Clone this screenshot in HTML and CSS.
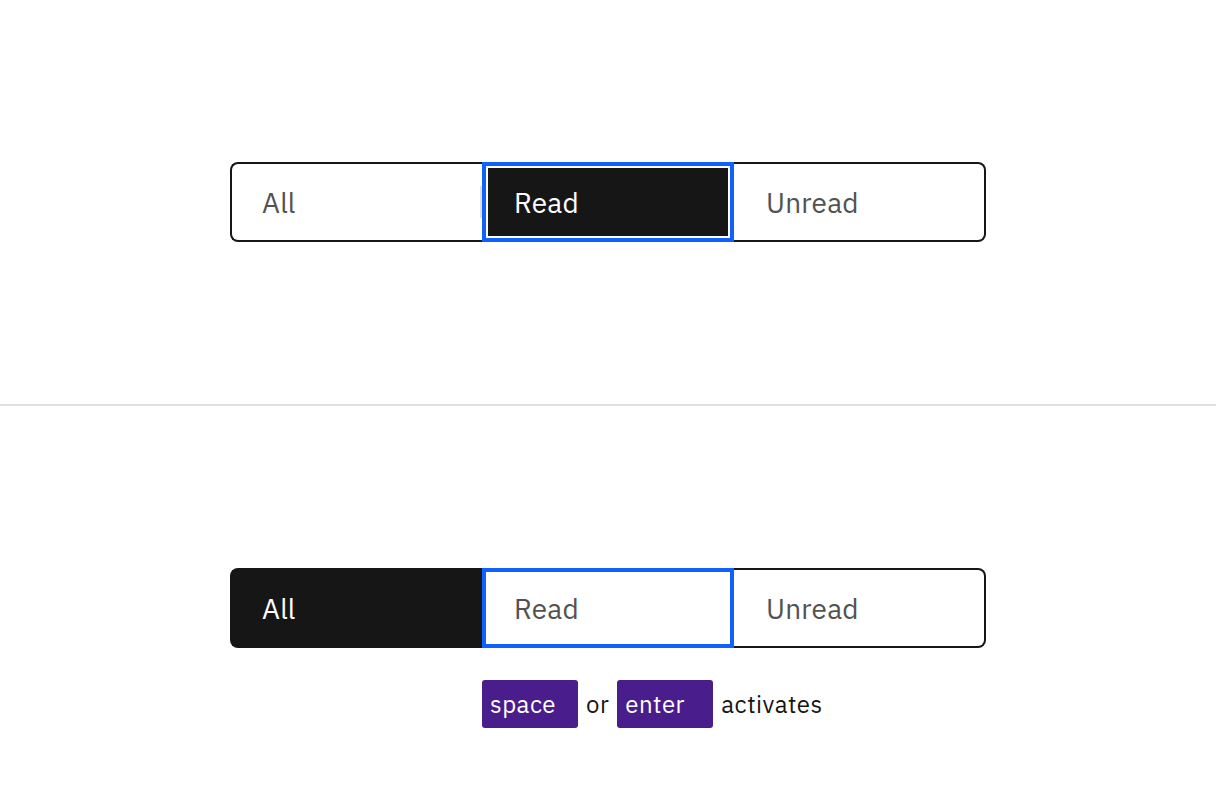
FILE: index.html
```html
<!DOCTYPE html>
<html lang="en">
<head>
<meta charset="utf-8">
<title>Content switcher</title>
<link rel="stylesheet" href="styles.css">
</head>
<body>
<main class="page">
  <section class="panel">
    <div class="switcher" role="tablist">
      <button class="seg seg-first seg-divider">All</button>
      <button class="seg seg-selected seg-focus">Read</button>
      <button class="seg seg-last">Unread</button>
    </div>
  </section>
  <hr class="rule">
  <section class="panel">
    <div class="group">
      <div class="switcher" role="tablist">
        <button class="seg seg-first seg-selected">All</button>
        <button class="seg seg-focus">Read</button>
        <button class="seg seg-last">Unread</button>
      </div>
      <div class="hint">
        <span class="key">space</span>
        <span class="word">or</span>
        <span class="key">enter</span>
        <span class="word">activates</span>
      </div>
    </div>
  </section>
</main>
</body>
</html>
```

FILE: styles.css
```css
* { box-sizing: border-box; }

html, body {
  margin: 0;
  padding: 0;
  background: #ffffff;
}

body {
  font-family: "IBM Plex Sans", "Noto Sans", "Open Sans", sans-serif;
  color: #161616;
}

.page {
  display: flex;
  flex-direction: column;
  width: 1216px;
  height: 810px;
}

.panel {
  height: 404px;
  display: flex;
  flex-direction: column;
  align-items: center;
  padding-top: 162px;
}

.rule {
  margin: 0;
  border: none;
  height: 2px;
  background: #e0e0e0;
}

.group {
  display: flex;
  flex-direction: column;
  gap: 32px;
}

.switcher {
  display: flex;
  width: 756px;
  height: 80px;
}

.seg {
  position: relative;
  width: 252px;
  height: 80px;
  display: flex;
  align-items: center;
  padding: 0 0 0 32px;
  margin: 0;
  background: #ffffff;
  border: 2px solid #161616;
  border-left: none;
  border-right: none;
  font-family: inherit;
  font-size: 28px;
  font-weight: 400;
  letter-spacing: 0.2px;
  color: #525252;
  text-align: left;
  cursor: pointer;
}

.seg-first {
  border-left: 2px solid #161616;
  border-radius: 8px 0 0 8px;
  padding-left: 30px;
}

.seg-last {
  border-right: 2px solid #161616;
  border-radius: 0 8px 8px 0;
}

.seg-divider::after {
  content: "";
  position: absolute;
  right: 0;
  top: 22px;
  width: 2px;
  height: 32px;
  background: #e0e0e0;
}

.seg-selected {
  background: #161616;
  color: #ffffff;
}

.seg-focus {
  border: 2px solid #0f62fe;
  box-shadow: inset 0 0 0 2px #0f62fe, inset 0 0 0 4px #ffffff;
  padding-left: 30px;
}

.hint {
  display: flex;
  align-items: center;
  gap: 8px;
  padding-left: 252px;
  font-size: 24px;
  line-height: 1;
  letter-spacing: 0.5px;
}

.key {
  width: 96px;
  height: 48px;
  display: flex;
  align-items: center;
  padding-left: 8px;
  background: #491d8b;
  color: #ffffff;
  border-radius: 3px;
}

.word {
  color: #161616;
}
```
